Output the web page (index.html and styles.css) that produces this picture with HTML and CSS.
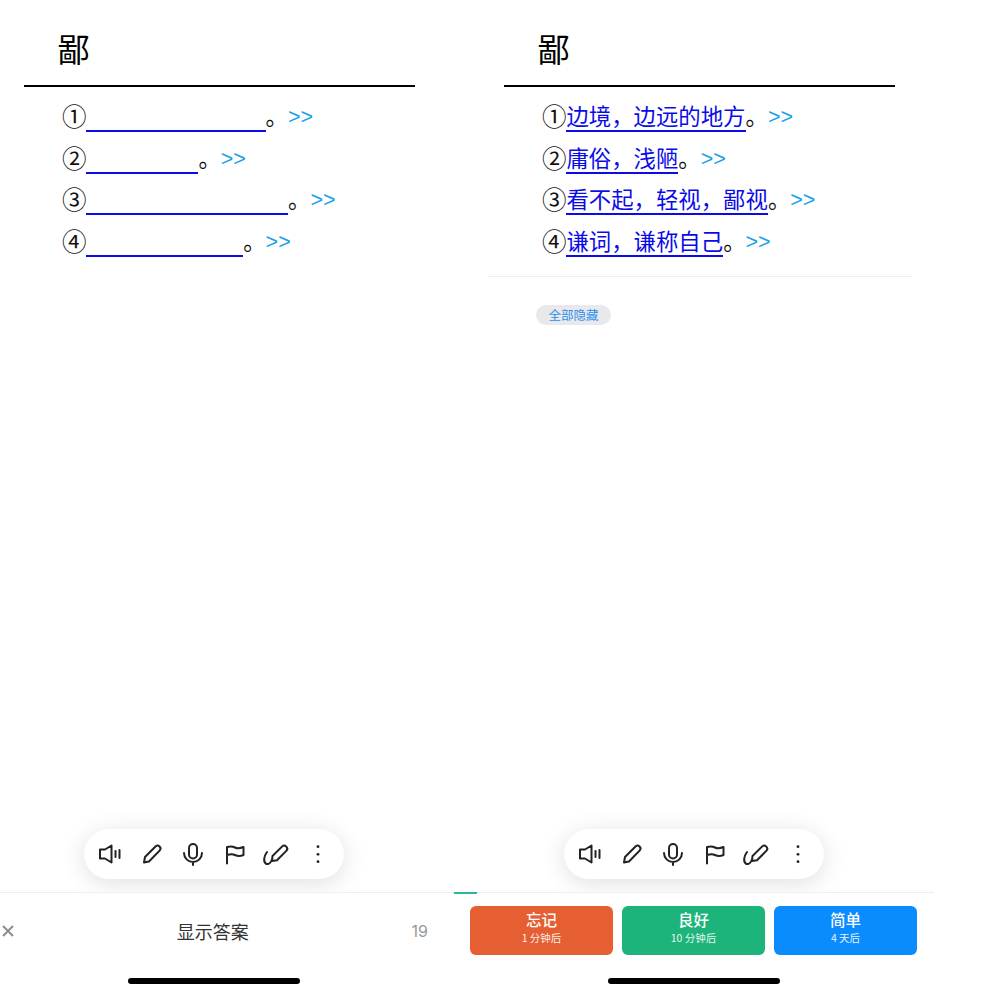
FILE: index.html
```html
<!DOCTYPE html>
<html lang="zh-Hans">
<head>
    <meta charset="UTF-8">
    <meta name="viewport" content="width=device-width, initial-scale=1.0">
    <title>鄙</title>
    <link rel="stylesheet" href="styles.css">
</head>
<body>
    <div class="screens">
        <!-- question side -->
        <section class="phone">
            <div class="note">
                <h1>鄙</h1>
                <ol class="senses">
                    <li><span class="num">①</span><span class="cloze w8"></span>。<a class="more">&gt;&gt;</a></li>
                    <li><span class="num">②</span><span class="cloze w5"></span>。<a class="more">&gt;&gt;</a></li>
                    <li><span class="num">③</span><span class="cloze w9"></span>。<a class="more">&gt;&gt;</a></li>
                    <li><span class="num">④</span><span class="cloze w7"></span>。<a class="more">&gt;&gt;</a></li>
                </ol>
            </div>
            <div class="toolbar">
                <svg class="icon" viewBox="0 0 24 24"><path d="M2 7.5H7L13.5 3.5V20.5L7 16.5H2Z"/><path d="M17.5 9V15M21.5 8V16"/></svg>
                <svg class="icon" viewBox="0 0 24 24"><path d="M5 15L15.5 4.5A2.9 2.9 0 0 1 19.6 8.6L9 19.5L4 20.5Z"/></svg>
                <svg class="icon" viewBox="0 0 24 24"><rect x="8" y="2" width="8" height="14.5" rx="4"/><path d="M3 11A9 9 0 0 0 21 11M12 20V23"/></svg>
                <svg class="icon" viewBox="0 0 24 24"><path d="M4 21.5V5C8 4 10 4.5 12 5.5S17 6.5 20.5 5V13C17 14.5 14 14 12 13S7 12 4 13"/></svg>
                <svg class="icon" viewBox="0 0 24 24"><path d="M8.5 14L18 4.6A3 3 0 0 1 22.3 8.9L13 18.300L8 19Z"/><path d="M3 10C0 14 -1 20 2 21.800C5 23 7 20 8 17.500"/></svg>
                <svg class="icon" viewBox="0 0 24 24"><circle class="dot" cx="12" cy="4.700" r="1.400"/><circle class="dot" cx="12" cy="12.300" r="1.400"/><circle class="dot" cx="12" cy="19.700" r="1.400"/></svg>
            </div>
            <div class="bottom-bar">
                <div class="answer-row">
                    <svg class="close" viewBox="0 0 12 12"><path d="M1 1L11 11M11 1L1 11"/></svg>
                    <span class="show-answer">显示答案</span>
                    <span class="count">19</span>
                </div>
            </div>
            <div class="home-indicator"></div>
        </section>

        <!-- answer side -->
        <section class="phone">
            <div class="note">
                <h1>鄙</h1>
                <ol class="senses">
                    <li><span class="num">①</span><span class="cloze">边境，边远的地方</span>。<a class="more">&gt;&gt;</a></li>
                    <li><span class="num">②</span><span class="cloze">庸俗，浅陋</span>。<a class="more">&gt;&gt;</a></li>
                    <li><span class="num">③</span><span class="cloze">看不起，轻视，鄙视</span>。<a class="more">&gt;&gt;</a></li>
                    <li><span class="num">④</span><span class="cloze">谦词，谦称自己</span>。<a class="more">&gt;&gt;</a></li>
                </ol>
                <hr class="divider">
                <span class="pill">全部隐藏</span>
            </div>
            <div class="toolbar">
                <svg class="icon" viewBox="0 0 24 24"><path d="M2 7.5H7L13.5 3.5V20.5L7 16.5H2Z"/><path d="M17.5 9V15M21.5 8V16"/></svg>
                <svg class="icon" viewBox="0 0 24 24"><path d="M5 15L15.5 4.5A2.9 2.9 0 0 1 19.6 8.6L9 19.5L4 20.5Z"/></svg>
                <svg class="icon" viewBox="0 0 24 24"><rect x="8" y="2" width="8" height="14.5" rx="4"/><path d="M3 11A9 9 0 0 0 21 11M12 20V23"/></svg>
                <svg class="icon" viewBox="0 0 24 24"><path d="M4 21.5V5C8 4 10 4.5 12 5.5S17 6.5 20.5 5V13C17 14.5 14 14 12 13S7 12 4 13"/></svg>
                <svg class="icon" viewBox="0 0 24 24"><path d="M8.5 14L18 4.6A3 3 0 0 1 22.3 8.9L13 18.300L8 19Z"/><path d="M3 10C0 14 -1 20 2 21.800C5 23 7 20 8 17.500"/></svg>
                <svg class="icon" viewBox="0 0 24 24"><circle class="dot" cx="12" cy="4.700" r="1.400"/><circle class="dot" cx="12" cy="12.300" r="1.400"/><circle class="dot" cx="12" cy="19.700" r="1.400"/></svg>
            </div>
            <div class="bottom-bar">
                <div class="progress"></div>
                <div class="grades">
                    <div class="grade again"><strong>忘记</strong><small>1 分钟后</small></div>
                    <div class="grade good"><strong>良好</strong><small>10 分钟后</small></div>
                    <div class="grade easy"><strong>简单</strong><small>4 天后</small></div>
                </div>
            </div>
            <div class="home-indicator"></div>
        </section>
    </div>
</body>
</html>
```

FILE: styles.css
```css
html, body {
    margin: 0;
    height: 988px;
    overflow: hidden;
    background-color: white;
}
body {
    font-family: "Noto Sans CJK SC", "Liberation Sans", sans-serif;
    color: #111;
}
.screens {
    display: flex;
    margin-left: -26px;
}
.phone {
    flex: none;
    width: 480px;
    height: 988px;
    display: flex;
    flex-direction: column;
}
.note {
    height: 829px;
}
h1 {
    margin: 0 0 0 50px;
    width: 391px;
    box-sizing: border-box;
    height: 87px;
    padding: 25px 0 0 33.500px;
    border-bottom: 2px solid black;
    font-size: 32.500px;
    line-height: 46px;
    font-weight: 400;
    color: black;
}
.senses {
    list-style: none;
    margin: 0;
    padding: 8px 0 0 90px;
    font-size: 22.4px;
    line-height: 41.500px;
    height: 180px;
    box-sizing: border-box;
}
.senses li {
    height: 41.500px;
    white-space: nowrap;
}
.num {
    display: inline-block;
    width: 22.400px;
    margin-left: -2px;
    padding-right: 2px;
    font-size: 24.500px;
    line-height: 27px;
    vertical-align: -1px;
}
.cloze {
    display: inline-block;
    line-height: 27px;
    padding-bottom: 1px;
    border-bottom: 2px solid #0b0be8;
    color: #0b0be8;
}
.cloze::before {
    content: "\200b";
}
.w5 { width: 5em; }
.w7 { width: 7em; }
.w8 { width: 8em; }
.w9 { width: 9em; }
.more {
    font-family: "Liberation Sans", sans-serif;
    font-size: 21.500px;
    color: #1a9fe8;
    position: relative;
    top: -1px;
}
.divider {
    margin: 9px 22px 0 34px;
    border: 0;
    border-top: 1px solid #eee;
}
.pill {
    display: inline-block;
    margin: 28px 0 0 82px;
    padding: 0 12.500px;
    height: 20px;
    line-height: 19px;
    border-radius: 10px;
    background-color: #e9e9eb;
    color: #2f8fee;
    font-size: 12.500px;
}
.toolbar {
    align-self: center;
    display: grid;
    grid-template-columns: repeat(6, 41.500px);
    justify-items: center;
    align-items: center;
    box-sizing: border-box;
    width: 260px;
    height: 50px;
    padding: 0 5.500px;
    border-radius: 25px;
    background-color: white;
    box-shadow: 0 4px 24px rgba(0,0,0,0.13);
    position: relative;
}
.icon {
    width: 24px;
    height: 24px;
    fill: none;
    stroke: #222;
    stroke-width: 2;
    stroke-linecap: round;
    stroke-linejoin: round;
    overflow: visible;
}
.icon .dot {
    fill: #222;
    stroke: none;
}
.bottom-bar {
    margin-top: 13px;
    height: 85px;
    box-sizing: border-box;
    border-top: 1px solid #eee;
    background-color: white;
    position: relative;
}
.progress {
    position: absolute;
    left: 0;
    top: -1px;
    width: 23px;
    height: 2px;
    background-color: #2bb896;
}
.answer-row {
    display: flex;
    align-items: center;
    justify-content: space-between;
    height: 75px;
    padding: 0 26px 0 28px;
}
.close {
    width: 12px;
    height: 12px;
    fill: none;
    stroke: #8c8c8c;
    stroke-width: 2;
}
.show-answer {
    font-size: 18px;
    color: #333;
}
.count {
    font-family: Inter, "Liberation Sans", sans-serif;
    font-size: 16px;
    color: #999;
}
.grades {
    display: grid;
    grid-template-columns: repeat(3, 1fr);
    gap: 9px;
    padding: 13px 17px 0 16px;
}
.grade {
    height: 49px;
    border-radius: 6px;
    color: white;
    display: flex;
    flex-direction: column;
    align-items: center;
    padding-top: 3px;
    box-sizing: border-box;
}
.grade strong {
    font-size: 15.500px;
    font-weight: 500;
    line-height: 21px;
}
.grade small {
    font-size: 10.500px;
    line-height: 16px;
    opacity: 0.9;
}
.again { background-color: #e65f33; }
.good { background-color: #1cb47a; }
.easy { background-color: #0a8cff; }
.home-indicator {
    align-self: center;
    width: 172px;
    height: 6px;
    margin-top: 1px;
    border-radius: 3px;
    background-color: black;
}
```
